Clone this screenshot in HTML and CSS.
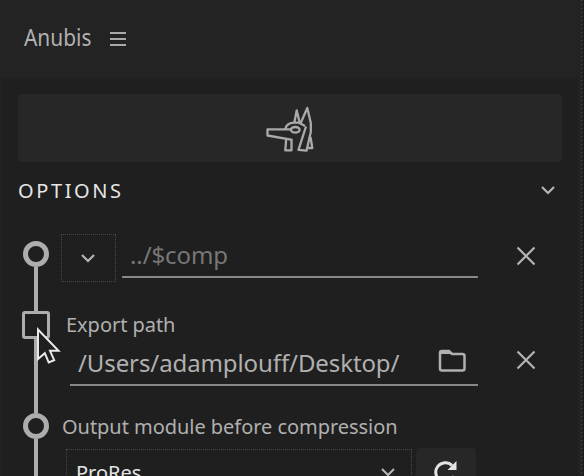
FILE: index.html
```html
<!DOCTYPE html>
<html lang="en">
<head>
<meta charset="utf-8">
<title>Anubis</title>
<link rel="stylesheet" href="styles.css">
</head>
<body>
<div class="window">
  <header class="titlebar">
    <span class="title"><span>Anubis</span></span>
    <span class="menu"><i></i><i></i><i></i></span>
  </header>
  <main class="panel">
    <div class="hero">
      <svg width="50" height="48" viewBox="0 0 50 48" fill="none" stroke="#aaa" stroke-width="2.3" stroke-linejoin="round">
        <path d="M20.300 23.300C21 19 24.500 17 28.500 16.700L34 16.700L40 20"/>
        <path d="M29.300 16.700L31.700 4.500L34.700 16.500"/>
        <path d="M35.500 17.500L42.300 2L45.800 17V26L41.500 44.700L33.500 43.800L41 20.500"/>
        <path d="M45.500 31L47.300 42H42.500"/>
        <path d="M26 23.300H2.500V29.500L27.500 33.800"/>
        <path d="M21.200 33L20.300 44.300H26.500V34"/>
        <ellipse cx="30.300" cy="23.800" rx="4.300" ry="2.800"/>
      </svg>
    </div>
    <div class="section">
      <span class="section-title">OPTIONS</span>
      <svg width="16" height="10" viewBox="0 0 16 10" class="chev"><path d="M2 2L8 8L14 2"/></svg>
    </div>

    <div class="row row-name">
      <div class="track"><span class="gap"></span><span class="circle"></span><span class="stem"></span></div>
      <div class="picker"><svg width="16" height="10" viewBox="0 0 16 10" class="chev"><path d="M2 2L8 8L14 2"/></svg></div>
      <div class="field"><span class="placeholder">../$comp</span></div>
      <svg width="20" height="20" viewBox="0 0 20 20" class="close"><path d="M1.500 1.500L18.500 18.500M18.500 1.500L1.500 18.500"/></svg>
    </div>

    <div class="row row-path">
      <div class="track"><span class="stem top"></span><span class="square"></span><span class="stem"></span></div>
      <div class="path-body">
        <div class="label">Export path</div>
        <div class="field">
          <span class="value">/Users/adamplouff/Desktop/</span>
          <svg width="28" height="24" viewBox="0 0 28 24" class="folder"><path d="M2 4Q2 2 4 2H11L14 5H24.500Q26.500 5 26.500 7V19.500Q26.500 21.500 24.500 21.500H4Q2 21.500 2 19.500Z"/><path class="tab" d="M2 5V3Q2 1.500 4 1.500H11L14 5Z"/></svg>
        </div>
      </div>
      <svg width="20" height="20" viewBox="0 0 20 20" class="close"><path d="M1.500 1.500L18.500 18.500M18.500 1.500L1.500 18.500"/></svg>
    </div>

    <div class="row row-module">
      <div class="track"><span class="stem top"></span><span class="circle"></span><span class="stem"></span></div>
      <div class="module-body">
        <div class="label wide">Output module before compression</div>
        <div class="controls">
          <div class="select"><span class="select-value">ProRes</span><svg width="16" height="10" viewBox="0 0 16 10" class="chev"><path d="M2 2L8 8L14 2"/></svg></div>
          <div class="refresh"><svg width="24" height="24" viewBox="0 0 24 24"><path d="M20 16A9.500 9.500 0 1 1 18 5.500" fill="none" stroke="#e4e4e4" stroke-width="3"/><path d="M22.500 1V10H13.500Z" fill="#e4e4e4"/></svg></div>
        </div>
      </div>
    </div>
  </main>
  <svg class="cursor" width="26" height="40" viewBox="0 0 26 40"><path d="M2 2.500V32L8.800 26.200L12.700 35.500L18.200 33.200L14 23.800H22.500Z" fill="#1f1f1f" stroke="#e8e8e8" stroke-width="2"/></svg>
</div>
</body>
</html>
```
FILE: styles.css
```css
* { box-sizing: border-box; }
body {
  margin: 0;
  background: #232323;
  font-family: "Noto Sans", "Open Sans", sans-serif;
  color: #b0b0b0;
}
.window {
  position: relative;
  width: 584px;
  height: 476px;
  overflow: hidden;
  padding: 0 2px;
  border-right: 1px solid #1c1c1c;
}
.window::after {
  content: "";
  position: absolute;
  top: 0;
  right: 1px;
  width: 1px;
  height: 100%;
  background: repeating-linear-gradient(#484848 0 1px, #222 1px 4px);
}
.titlebar {
  height: 78px;
  padding-left: 22px;
  display: flex;
  align-items: center;
}
.title {
  width: 86px;
  margin-top: -4px;
  font-size: 23px;
  line-height: 30px;
  white-space: nowrap;
}
.title span {
  display: inline-block;
  transform: scaleX(0.91);
  transform-origin: left;
}
.menu { display: grid; gap: 4px; }
.menu i { width: 16px; height: 2px; background: #a9a9a9; }
.panel {
  width: 576px;
  height: 398px;
  padding: 16px;
  background: #1f1f1f;
}
.hero {
  height: 68px;
  border-radius: 4px;
  background: #272727;
  display: flex;
  justify-content: center;
  padding-top: 12px;
}
.section {
  height: 56px;
  padding-right: 6px;
  display: flex;
  align-items: center;
  justify-content: space-between;
}
.section-title { font-size: 20px; letter-spacing: 2.6px; color: #e6e6e6; }
.chev { fill: none; stroke: #b5b5b5; stroke-width: 2.2; }
.row { display: flex; width: 544px; }
.track {
  width: 36px;
  flex: none;
  display: flex;
  flex-direction: column;
  align-items: center;
}
.circle { width: 26px; height: 26px; flex: none; border: 5px solid #adadad; border-radius: 50%; }
.square { width: 28px; height: 28px; flex: none; border: 3px solid #adadad; border-radius: 3px; }
.stem { width: 4px; flex: 1; background: #adadad; }
.row-name { height: 72px; }
.row-name .gap { height: 23px; }
.picker {
  width: 55px;
  height: 48px;
  margin: 16px 6px 0 7px;
  border: 1px dotted #4a4a4a;
  display: flex;
  align-items: center;
  justify-content: center;
  padding-right: 1px;
}
.field {
  height: 46px;
  border-bottom: 2px solid #888;
  padding-left: 8px;
  display: flex;
  align-items: center;
  font-size: 24px;
  letter-spacing: -0.1px;
  white-space: nowrap;
}
.row-name .field { width: 356px; margin-top: 14px; }
.placeholder { color: #777; }
.close { fill: none; stroke: #b4b4b4; stroke-width: 2.2; margin-left: 38px; }
.row-name .close { margin-top: 28px; }
.row-path { height: 100px; }
.row-path .top { flex: none; height: 21px; }
.path-body { width: 424px; padding: 21px 0 0 12px; }
.label { font-size: 20px; line-height: 28px; letter-spacing: -0.04px; white-space: nowrap; }
.path-body .field {
  width: 408px;
  margin: 1px 0 0 4px;
  padding-right: 12px;
  justify-content: space-between;
}
.folder { fill: none; stroke: #b0b0b0; stroke-width: 2.5; margin-top: -3px; }
.folder .tab { fill: #b0b0b0; stroke: none; }
.row-path .close { margin-top: 60px; }
.row-module { height: 86px; overflow: hidden; }
.row-module .top { flex: none; height: 23px; }
.module-body { padding: 23px 0 0 8px; }
.controls { display: flex; gap: 4px; margin: 7px 0 0 4px; }
.select {
  width: 346px;
  height: 46px;
  border: 1px dotted #4a4a4a;
  margin-top: 1px;
  display: flex;
  align-items: center;
  justify-content: space-between;
  padding: 0 15px 0 9px;
}
.select-value { font-size: 20px; color: #e4e4e4; }
.refresh {
  width: 60px;
  height: 48px;
  border-radius: 4px;
  background: #272727;
  display: flex;
  align-items: center;
  justify-content: center;
}
.cursor { position: absolute; left: 35.500px; top: 326.500px; }
```
